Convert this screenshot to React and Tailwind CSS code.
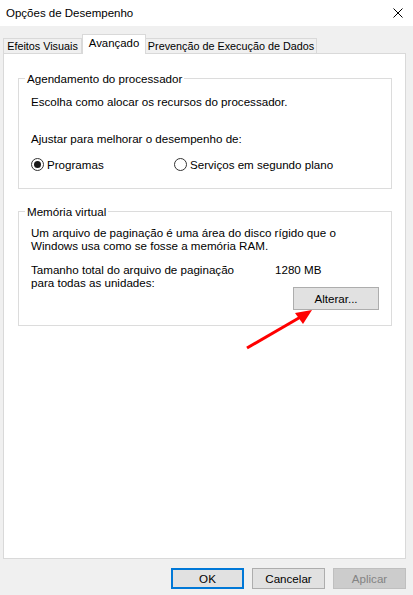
import React from "react";

const font = { fontFamily: '"Segoe UI", "Liberation Sans", Arial, sans-serif' };

const Radio = ({ checked, label }) => (
  <label className="flex items-center gap-[3px] leading-[13px]">
    <span className="w-[13px] h-[13px] rounded-full border border-[#333333] bg-white flex items-center justify-center">
      {checked && <span className="w-[7px] h-[7px] rounded-full bg-[#1a1a1a]" />}
    </span>
    <span>{label}</span>
  </label>
);

const GroupBox = ({ title, className, children }) => (
  <fieldset className={`border border-[#dcdcdc] px-[12px] ${className}`}>
    <legend className="-ml-[6px] px-[2px] leading-[15px]">{title}</legend>
    {children}
  </fieldset>
);

const Btn = ({ children, primary, disabled }) => (
  <button
    className={
      "w-[73px] h-[21px] leading-none " +
      (primary
        ? "border-2 border-[#0078d7] bg-[#e1e1e1] text-black"
        : disabled
        ? "border border-[#bfbfbf] bg-[#cccccc] text-[#838383]"
        : "border border-[#adadad] bg-[#e1e1e1] text-black")
    }
  >
    {children}
  </button>
);

export default function App() {
  return (
    <div
      className="relative w-[413px] h-[595px] bg-[#f0f0f0] text-[11.6px] text-black flex flex-col overflow-hidden"
      style={font}
    >
      {/* barra de titulo */}
      <div className="h-[26px] bg-white flex items-center justify-between pl-[6px] pr-[10px]">
        <span className="leading-[15px] text-[11.5px]">Opções de Desempenho</span>
        <svg width="10" height="10" viewBox="0 0 10 10" className="text-black">
          <path d="M0.5 0.5L9.5 9.5M9.5 0.5L0.5 9.5" stroke="currentColor" strokeWidth="1" />
        </svg>
      </div>

      {/* abas */}
      <div className="h-[27px] flex items-end pl-[3px] whitespace-nowrap text-[10.8px]">
        <div className="w-[79px] h-[15px] border border-b-0 border-[#d9d9d9] bg-[#f0f0f0] flex items-center justify-center leading-[13px]">
          Efeitos Visuais
        </div>
        <div className="relative z-10 w-[64px] h-[20px] -mb-px border border-b-0 border-[#d9d9d9] bg-white flex items-center justify-center leading-[13px] pb-[2px] text-[11.4px]">
          Avançado
        </div>
        <div className="w-[171px] h-[15px] border border-b-0 border-l-0 border-[#d9d9d9] bg-[#f0f0f0] flex items-center justify-center leading-[13px]">
          Prevenção de Execução de Dados
        </div>
      </div>

      {/* painel */}
      <div className="ml-[3px] w-[403px] h-[506px] border border-[#d9d9d9] bg-white pl-[14px] pt-[17px]">
        <GroupBox title="Agendamento do processador" className="w-[374px] h-[118px]">
          <p className="leading-[13px] mt-[9px]">Escolha como alocar os recursos do processador.</p>
          <p className="leading-[13px] mt-[24px]">Ajustar para melhorar o desempenho de:</p>
          <div className="flex mt-[13px]">
            <div className="w-[143px]">
              <Radio checked label="Programas" />
            </div>
            <Radio label="Serviços em segundo plano" />
          </div>
        </GroupBox>

        <GroupBox title="Memória virtual" className="w-[374px] h-[122px] mt-[15px]">
          <p className="leading-[13px] mt-[7px]">
            Um arquivo de paginação é uma área do disco rígido que o
            <br />
            Windows usa como se fosse a memória RAM.
          </p>
          <div className="flex mt-[11px]">
            <p className="leading-[13px] w-[244px]">
              Tamanho total do arquivo de paginação
              <br />
              para todas as unidades:
            </p>
            <span className="leading-[13px]">1280 MB</span>
          </div>
          <div className="flex justify-end -mt-[2px]">
            <button className="w-[86px] h-[23px] border border-[#adadad] bg-[#e1e1e1] leading-none">
              Alterar...
            </button>
          </div>
        </GroupBox>
      </div>

      {/* botoes */}
      <div className="flex justify-end gap-[8px] pr-[7px] mt-[9px]">
        <Btn primary>OK</Btn>
        <Btn>Cancelar</Btn>
        <Btn disabled>Aplicar</Btn>
      </div>

      {/* seta vermelha */}
      <svg className="absolute inset-0 pointer-events-none" width="413" height="595">
        <line x1="247" y1="348" x2="304" y2="315" stroke="#ff0000" strokeWidth="3" />
        <polygon points="312,310 295,313 303,324" fill="#ff0000" />
      </svg>
    </div>
  );
}
